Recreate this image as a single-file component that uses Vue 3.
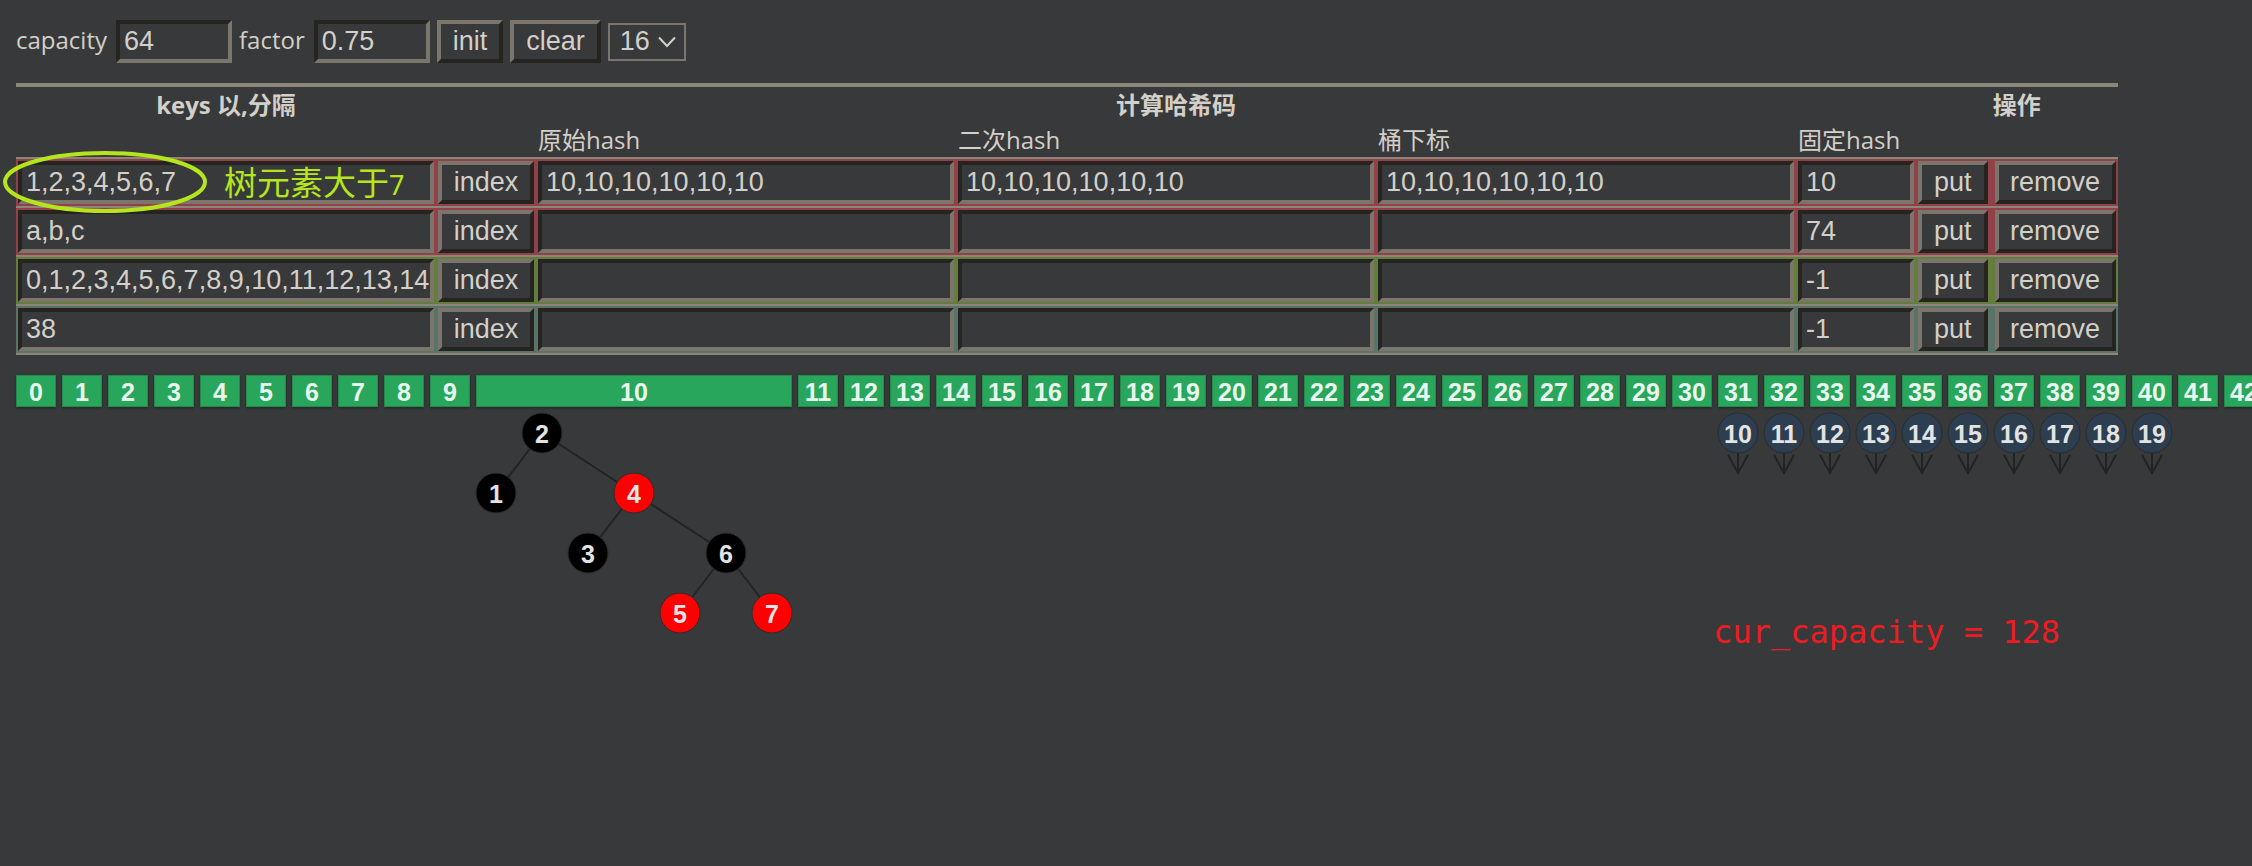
<script setup>
import { reactive, ref } from 'vue'

const capacity = ref('64')
const factor = ref('0.75')
const size = ref('16')

const rows = reactive([
  { tone: 'red', keys: '1,2,3,4,5,6,7', raw: '10,10,10,10,10,10', second: '10,10,10,10,10,10', slot: '10,10,10,10,10,10', fixed: '10', note: true },
  { tone: 'red', keys: 'a,b,c', raw: '', second: '', slot: '', fixed: '74' },
  { tone: 'olive', keys: '0,1,2,3,4,5,6,7,8,9,10,11,12,13,14', raw: '', second: '', slot: '', fixed: '-1' },
  { tone: 'teal', keys: '38', raw: '', second: '', slot: '', fixed: '-1' },
])
const hashFields = ['raw', 'second', 'slot']
const fieldNames = { raw: '原始hash', second: '二次hash', slot: '桶下标' }

const buckets = Array.from({ length: 43 }, (_, i) => ({
  index: i,
  tree: i === 10,
  chain: i >= 31 && i <= 40 ? i - 21 : null,
}))

const nodes = [
  { k: 2, x: 66, y: 26, c: 'black' },
  { k: 1, x: 20, y: 86, c: 'black' },
  { k: 4, x: 158, y: 86, c: 'crimson' },
  { k: 3, x: 112, y: 146, c: 'black' },
  { k: 6, x: 250, y: 146, c: 'black' },
  { k: 5, x: 204, y: 206, c: 'crimson' },
  { k: 7, x: 296, y: 206, c: 'crimson' },
]
const edges = [[0, 1], [0, 2], [2, 3], [2, 4], [4, 5], [4, 6]]
</script>

<template>
  <main class="page">
    <form class="toolbar" @submit.prevent>
      <label for="capacity">capacity</label>
      <input id="capacity" v-model="capacity" class="field short" type="text" />
      <label for="factor">factor</label>
      <input id="factor" v-model="factor" class="field short" type="text" />
      <button class="btn" type="button">init</button>
      <button class="btn" type="button">clear</button>
      <div class="picker">
        <select v-model="size" aria-label="size">
          <option>16</option>
          <option>32</option>
          <option>64</option>
        </select>
        <svg class="chevron" viewBox="0 0 18 12" width="18" height="12" aria-hidden="true">
          <path d="M1 1.500 L9 10 L17 1.500" />
        </svg>
      </div>
    </form>

    <table class="grid">
      <thead>
        <tr>
          <th>keys 以,分隔</th>
          <th colspan="5">计算哈希码</th>
          <th colspan="2">操作</th>
        </tr>
        <tr>
          <td></td>
          <td></td>
          <td>原始hash</td>
          <td>二次hash</td>
          <td>桶下标</td>
          <td>固定hash</td>
          <td></td>
          <td></td>
        </tr>
      </thead>
      <tbody>
        <tr v-for="(row, i) in rows" :key="i" :class="row.tone">
          <td>
            <div class="cell">
              <input v-model="row.keys" class="field long" type="text" aria-label="keys" />
              <template v-if="row.note">
                <svg class="ring" viewBox="0 0 204 62" width="204" height="62" aria-hidden="true">
                  <ellipse cx="102" cy="31" rx="100" ry="29" />
                </svg>
                <span class="note">树元素大于<span class="digit">7</span></span>
              </template>
            </div>
          </td>
          <td><button class="btn index" type="button">index</button></td>
          <td v-for="f in hashFields" :key="f">
            <input v-model="row[f]" class="field long" type="text" :aria-label="fieldNames[f]" />
          </td>
          <td><input v-model="row.fixed" class="field short" type="text" aria-label="固定hash" /></td>
          <td class="put"><button class="btn" type="button">put</button></td>
          <td><button class="btn remove" type="button">remove</button></td>
        </tr>
      </tbody>
    </table>

    <div class="board">
      <section class="buckets">
        <div v-for="b in buckets" :key="b.index" class="bucket" :class="{ wide: b.tree }">
          <div class="slot">{{ b.index }}</div>
          <svg v-if="b.tree" class="tree" viewBox="0 0 316 228" width="316" height="228">
            <line
              v-for="([a, z], i) in edges"
              :key="i"
              class="edge"
              :x1="nodes[a].x"
              :y1="nodes[a].y"
              :x2="nodes[z].x"
              :y2="nodes[z].y"
            />
            <g v-for="n in nodes" :key="n.k">
              <circle :class="n.c" :cx="n.x" :cy="n.y" r="20" />
              <text :x="n.x" :y="n.y + 10">{{ n.k }}</text>
            </g>
          </svg>
          <svg v-if="b.chain !== null" class="chain" viewBox="0 0 40 70" width="40" height="70">
            <line class="edge" x1="20" y1="46" x2="20" y2="66" />
            <path class="edge" d="M10 48 L20 66 L30 48" />
            <circle class="blue" cx="20" cy="26" r="20" />
            <text x="20" y="36">{{ b.chain }}</text>
          </svg>
        </div>
      </section>
      <p class="status">cur_capacity = 128</p>
    </div>
  </main>
</template>

<style>
body {
  background: #38393a;
  overflow: hidden;
}
</style>

<style scoped>
.page {
  padding: 20px 0 0 16px;
  color: #d3cfc9;
  font: 24px/32px "Open Sans", "Noto Sans CJK SC", sans-serif;
}
.toolbar {
  display: flex;
  align-items: center;
  gap: 7px;
  margin-bottom: 20px;
}
.toolbar label {
  padding: 0 2px 3px 0;
}
.field,
.btn,
select {
  box-sizing: border-box;
  height: 43px;
  margin: 0;
  color: #d3cfc9;
  background: #38393a;
  font: 27px/31px "Liberation Sans", Arial, sans-serif;
  border-radius: 0;
  outline: 0;
}
.field {
  display: block;
  padding: 2px 0 2px 4px;
  border: 4px solid;
  border-color: #262421 #7c756b #7c756b #262421;
}
.short {
  width: 116px;
}
.long {
  width: 416px;
}
.btn {
  display: block;
  padding: 0 12px;
  border: 4px solid;
  border-color: #7c756b #262421 #262421 #7c756b;
}
.index {
  width: 96px;
  padding: 0;
}
.remove {
  width: 121px;
  padding: 0;
}
.picker {
  display: grid;
  align-items: center;
}
.picker > * {
  grid-area: 1 / 1;
}
select {
  appearance: none;
  width: 78px;
  height: 38px;
  padding: 0 0 0 10px;
  border: 2px solid #7c756b;
}
.chevron {
  justify-self: end;
  margin-right: 10px;
  pointer-events: none;
}
.chevron path {
  fill: none;
  stroke: #d3cfc9;
  stroke-width: 2;
}

.grid {
  border-spacing: 0;
  border-top: 4px solid #8c867a;
  border-bottom: 2px solid #8c867a;
}
.grid td,
.grid th {
  padding: 0 2px;
}
thead tr {
  height: 35px;
}
thead td {
  white-space: nowrap;
}
.grid tbody td {
  padding: 2px;
  border-top: 2px solid #8c867a;
}
.grid tbody .put {
  padding-right: 5px;
}
.red {
  background: #914147;
}
.olive {
  background: #647c3c;
}
.teal {
  background: #597369;
}
.cell {
  position: relative;
}
.ring {
  position: absolute;
  z-index: 1;
  left: -15px;
  top: -10px;
  overflow: visible;
  pointer-events: none;
  fill: none;
  stroke: #b5e61d;
  stroke-width: 4;
}
.note {
  position: absolute;
  left: 206px;
  top: 0;
  color: #b5e61d;
  font: 33px/40px "Noto Sans CJK SC", sans-serif;
  white-space: nowrap;
}
.digit {
  font: 27px/40px "Noto Sans", sans-serif;
}

.board {
  display: grid;
  grid-template-columns: minmax(0, 1fr);
  align-items: start;
  margin-top: 20px;
}
.board > * {
  grid-area: 1 / 1;
}
.buckets {
  display: flex;
  align-items: flex-start;
  gap: 6px;
}
.bucket {
  flex: none;
  width: 40px;
}
.wide {
  width: 316px;
}
.slot {
  box-sizing: border-box;
  height: 32px;
  background: #27a65c;
  border: 1px solid #218a4d;
  box-shadow: 0 1px 2px #242526;
  color: #e8f6ee;
  font: bold 25px/33px "Liberation Sans", Arial, sans-serif;
  text-align: center;
}
.tree,
.chain {
  display: block;
  overflow: visible;
}
.edge {
  fill: none;
  stroke: #222323;
  stroke-width: 2;
}
text {
  fill: #e3e3e3;
  font: bold 25px "Liberation Sans", Arial, sans-serif;
  text-anchor: middle;
}
circle {
  stroke: #2a2c2f;
  stroke-width: 1;
}
.black {
  fill: #000;
}
.crimson {
  fill: #f00;
}
.blue {
  fill: #2c3e50;
}
.status {
  margin: 237px 192px 0 0;
  color: #ed1c24;
  font: 32px/40px "DejaVu Sans Mono", monospace;
  text-align: right;
}
</style>
